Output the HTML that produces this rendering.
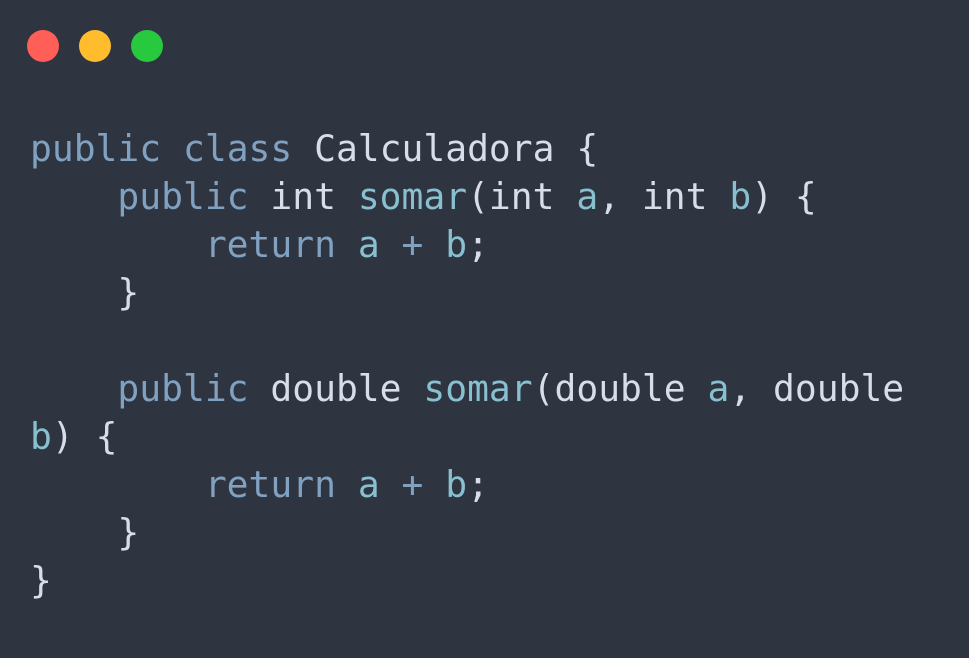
<!DOCTYPE html>
<html><head><meta charset="utf-8"><style>
html,body{margin:0;padding:0;background:#2e3440;width:969px;height:658px;overflow:hidden}
.d{position:absolute;top:30px;width:32px;height:32px;border-radius:50%}
pre{position:absolute;left:30px;top:125px;margin:0;font-family:"DejaVu Sans Mono","Liberation Mono",monospace;font-size:36.3px;line-height:48px;color:#d8dee9;white-space:pre}
.k{color:#81a1c1}.f{color:#88c0d0}.p{color:#88c0d0}
</style></head><body>
<div class="d" style="left:27px;background:#ff5f56"></div>
<div class="d" style="left:79px;background:#ffbd2e"></div>
<div class="d" style="left:131px;background:#27c93f"></div>
<pre><span class="k">public</span> <span class="k">class</span> Calculadora {
    <span class="k">public</span> int <span class="f">somar</span>(int <span class="p">a</span>, int <span class="p">b</span>) {
        <span class="k">return</span> <span class="p">a</span> <span class="k">+</span> <span class="p">b</span>;
    }

    <span class="k">public</span> double <span class="f">somar</span>(double <span class="p">a</span>, double
<span class="p">b</span>) {
        <span class="k">return</span> <span class="p">a</span> <span class="k">+</span> <span class="p">b</span>;
    }
}</pre>
</body></html>
